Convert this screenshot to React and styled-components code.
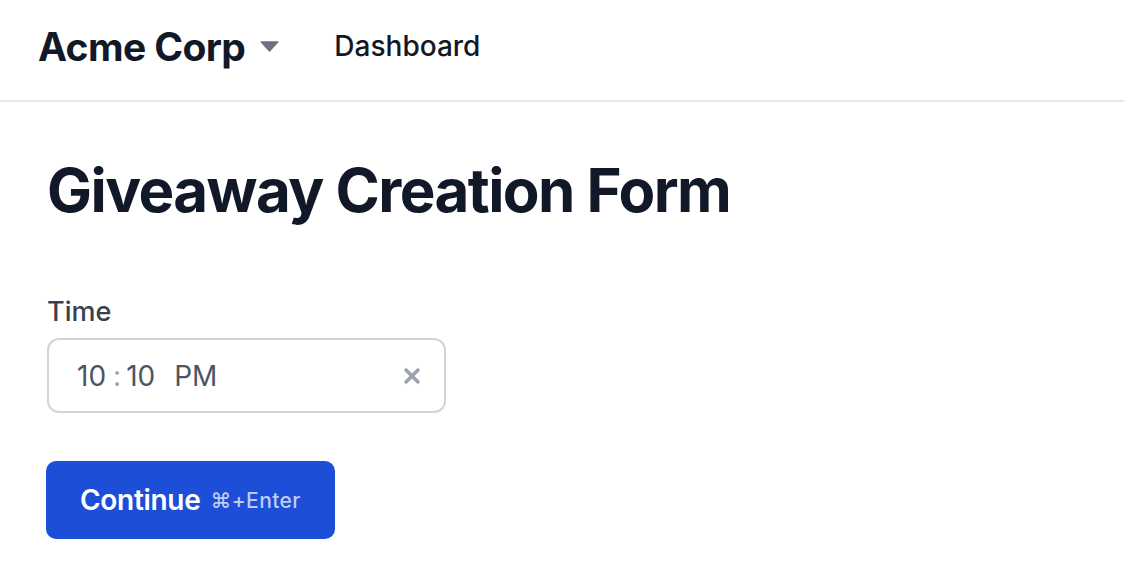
import React from 'react';
import styled, { createGlobalStyle } from 'styled-components';

const GlobalStyle = createGlobalStyle`
  html, body {
    margin: 0;
    padding: 0;
    background: #ffffff;
    font-family: Inter, "Noto Sans", sans-serif;
    -webkit-font-smoothing: antialiased;
  }
  * { box-sizing: border-box; }
`;

const Header = styled.header`
  height: 102px;
  border-bottom: 2px solid #e5e7eb;
  display: flex;
  align-items: center;
  padding: 0 38px 8px;
  gap: 55px;
`;

const Brand = styled.button`
  display: flex;
  align-items: center;
  gap: 15px;
  background: none;
  border: none;
  padding: 0;
  font-family: inherit;
  font-size: 39px;
  font-weight: 700;
  letter-spacing: -0.6px;
  color: #111827;
  cursor: pointer;
`;

const NavLink = styled.a`
  font-size: 28px;
  font-weight: 500;
  color: #111827;
  text-decoration: none;
`;

const Main = styled.main`
  padding: 52px 47px;
`;

const Title = styled.h1`
  margin: 0 0 69px;
  font-size: 60px;
  line-height: 72px;
  font-weight: 700;
  letter-spacing: -1.55px;
  color: #111827;
`;

const Field = styled.div`
  display: flex;
  flex-direction: column;
  gap: 10px;
  margin-bottom: 48px;
`;

const Label = styled.label`
  font-size: 27px;
  font-weight: 500;
  color: #374151;
`;

const TimeBox = styled.div`
  width: 399px;
  height: 75px;
  border: 2px solid #d1d5db;
  border-radius: 12px;
  display: flex;
  align-items: center;
  padding: 0 23px 0 28px;
  font-size: 28px;
  color: #4b5563;
`;

const Segment = styled.span`
  margin-right: ${(p) => p.$gap || 0}px;
`;

const Colon = styled.span`
  color: #9ca3af;
  margin: 0 5px 0 7px;
`;

const ClearButton = styled.button`
  margin-left: auto;
  background: none;
  border: none;
  padding: 0;
  display: flex;
  color: #9ca3af;
  cursor: pointer;
`;

const PrimaryButton = styled.button`
  display: inline-flex;
  align-items: center;
  gap: 10px;
  height: 78px;
  margin-left: -1px;
  padding: 0 34px;
  background: #1d4ed8;
  border: none;
  border-radius: 10px;
  font-family: inherit;
  color: #ffffff;
  font-size: 28px;
  font-weight: 600;
  letter-spacing: -0.3px;
  cursor: pointer;
`;

const Shortcut = styled.span`
  font-size: 21px;
  font-weight: 500;
  letter-spacing: 0.4px;
  color: rgba(255, 255, 255, 0.72);
`;

const Caret = () => (
  <svg width="19" height="11" viewBox="0 0 20 12">
    <path d="M1 1 L19 1 L10 11 Z" fill="#6b7280" stroke="#6b7280" strokeLinejoin="round" strokeWidth="1.5" />
  </svg>
);

const XIcon = () => (
  <svg width="18" height="18" viewBox="0 0 18 18">
    <path d="M2 2 L16 16 M16 2 L2 16" stroke="currentColor" strokeWidth="3.6" strokeLinecap="butt" />
  </svg>
);

export default function App() {
  return (
    <>
      <GlobalStyle />
      <Header>
        <Brand>
          Acme Corp
          <Caret />
        </Brand>
        <NavLink href="#">Dashboard</NavLink>
      </Header>
      <Main>
        <Title>Giveaway Creation Form</Title>
        <Field>
          <Label>Time</Label>
          <TimeBox>
            <Segment>10</Segment>
            <Colon>:</Colon>
            <Segment $gap={19}>10</Segment>
            <Segment>PM</Segment>
            <ClearButton aria-label="Clear">
              <XIcon />
            </ClearButton>
          </TimeBox>
        </Field>
        <PrimaryButton>
          Continue
          <Shortcut>⌘+Enter</Shortcut>
        </PrimaryButton>
      </Main>
    </>
  );
}
